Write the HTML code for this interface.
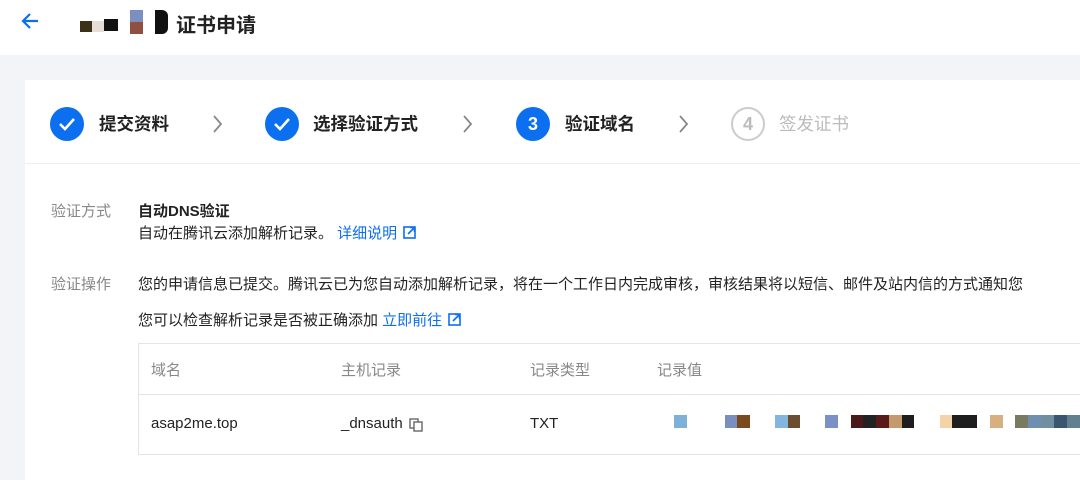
<!DOCTYPE html>
<html><head><meta charset="utf-8"><style>
*{margin:0;padding:0;box-sizing:border-box}
body{width:1080px;height:470px;overflow:hidden;background:#f2f4f7;font-family:"Liberation Sans","Noto Sans CJK SC",sans-serif;position:relative;color:#222}
.abs{position:absolute}
.hdr{left:0;top:0;width:1080px;height:55px;background:#fff}
.card{left:25px;top:80px;width:1060px;height:400px;background:#fff}
.circ{width:34px;height:34px;border-radius:50%;background:#0b6ff0;color:#fff;font-size:18px;font-weight:bold;display:flex;align-items:center;justify-content:center}
.st{font-size:17.5px;font-weight:bold;line-height:20px}
.lbl{font-size:15px;color:#888}
.t{font-size:15px;color:#222;white-space:nowrap}
.a{color:#0b6ff0}
.ic{display:inline-block;vertical-align:-1px;margin-left:6px}
.sq{position:absolute;top:415px;height:13px}
</style></head><body>
<div class="abs hdr"></div>
<svg class="abs" style="left:20px;top:11px" width="22" height="20"><path d="M18 10H4M10 3L3 10l7 7" stroke="#0b6ff0" stroke-width="2.2" fill="none"/></svg>
<div class="abs" style="left:80px;top:21px;width:12px;height:11px;background:#3d3018"></div>
<div class="abs" style="left:92px;top:21px;width:12px;height:11px;background:#e6ddd6"></div>
<div class="abs" style="left:104px;top:19px;width:14px;height:12px;background:#111"></div>
<div class="abs" style="left:130px;top:10px;width:13px;height:12px;background:#7b8fc0"></div>
<div class="abs" style="left:130px;top:22px;width:13px;height:12px;background:#905040"></div>
<div class="abs" style="left:155px;top:10px;width:13px;height:24px;background:#111;border-radius:0 6px 6px 0"></div>
<div class="abs" style="left:176px;top:9px;font-size:20px;font-weight:bold;color:#222">证书申请</div>
<div class="abs card"></div>
<div class="abs" style="left:25px;top:163px;width:1055px;height:1px;background:#eceef1"></div>

<div class="abs circ" style="left:50px;top:107px"><svg width="18" height="14"><path d="M2 7l5 5 9-10" stroke="#fff" stroke-width="2.6" fill="none"/></svg></div>
<div class="abs st" style="left:99px;top:114px">提交资料</div>
<svg class="abs" style="left:212px;top:114px" width="12" height="20"><path d="M2 2l7 8-7 8" stroke="#888" stroke-width="1.8" fill="none"/></svg>
<div class="abs circ" style="left:265px;top:107px"><svg width="18" height="14"><path d="M2 7l5 5 9-10" stroke="#fff" stroke-width="2.6" fill="none"/></svg></div>
<div class="abs st" style="left:313px;top:114px">选择验证方式</div>
<svg class="abs" style="left:462px;top:114px" width="12" height="20"><path d="M2 2l7 8-7 8" stroke="#888" stroke-width="1.8" fill="none"/></svg>
<div class="abs circ" style="left:516px;top:107px">3</div>
<div class="abs st" style="left:565px;top:114px">验证域名</div>
<svg class="abs" style="left:678px;top:114px" width="12" height="20"><path d="M2 2l7 8-7 8" stroke="#888" stroke-width="1.8" fill="none"/></svg>
<div class="abs circ" style="left:731px;top:107px;background:#fff;border:2px solid #ccc;color:#bbb">4</div>
<div class="abs st" style="left:779px;top:114px;color:#bbb;font-weight:normal">签发证书</div>

<div class="abs lbl" style="left:51px;top:200px">验证方式</div>
<div class="abs t" style="left:138px;top:200px;font-weight:bold">自动DNS验证</div>
<div class="abs t" style="left:138px;top:222px">自动在腾讯云添加解析记录。 <span class="a">详细说明</span><svg class="ic" width="13" height="13"><rect x="1" y="1" width="11" height="11" fill="none" stroke="#0b6ff0" stroke-width="1.6"/><path d="M5 8l6-6M7 1.5h4.5V6" stroke="#0b6ff0" stroke-width="1.6" fill="none"/></svg></div>
<div class="abs lbl" style="left:51px;top:273px">验证操作</div>
<div class="abs t" style="left:138px;top:273px">您的申请信息已提交。腾讯云已为您自动添加解析记录，将在一个工作日内完成审核，审核结果将以短信、邮件及站内信的方式通知您</div>
<div class="abs t" style="left:138px;top:309px">您可以检查解析记录是否被正确添加 <span class="a">立即前往</span><svg class="ic" width="13" height="13"><rect x="1" y="1" width="11" height="11" fill="none" stroke="#0b6ff0" stroke-width="1.6"/><path d="M5 8l6-6M7 1.5h4.5V6" stroke="#0b6ff0" stroke-width="1.6" fill="none"/></svg></div>

<div class="abs" style="left:138px;top:343px;width:950px;height:112px;border:1px solid #e2e4e8"></div>
<div class="abs" style="left:139px;top:344px;width:945px;height:51px;background:#fff;border-bottom:1px solid #e2e4e8"></div>
<div class="abs lbl" style="left:151px;top:359px">域名</div>
<div class="abs lbl" style="left:341px;top:359px">主机记录</div>
<div class="abs lbl" style="left:530px;top:359px">记录类型</div>
<div class="abs lbl" style="left:657px;top:359px">记录值</div>
<div class="abs t" style="left:151px;top:415px">asap2me.top</div>
<div class="abs t" style="left:341px;top:415px">_dnsauth</div>
<svg class="abs" style="left:409px;top:418px" width="14" height="14"><rect x="1" y="1" width="8" height="9" fill="none" stroke="#666" stroke-width="1.4"/><rect x="5" y="4" width="8" height="9" fill="#fff" stroke="#666" stroke-width="1.4"/></svg>
<div class="abs t" style="left:530px;top:415px">TXT</div>
<div class="sq" style="left:674px;width:13px;background:#7fb0d8"></div>
<div class="sq" style="left:725px;width:12px;background:#7b8fbf"></div>
<div class="sq" style="left:737px;width:13px;background:#7a4a1e"></div>
<div class="sq" style="left:775px;width:13px;background:#82b5e0"></div>
<div class="sq" style="left:788px;width:12px;background:#6b4e2e"></div>
<div class="sq" style="left:825px;width:13px;background:#7b8fc8"></div>
<div class="sq" style="left:851px;width:12px;background:#4a1a1a"></div>
<div class="sq" style="left:863px;width:13px;background:#222"></div>
<div class="sq" style="left:876px;width:13px;background:#5a1a1a"></div>
<div class="sq" style="left:889px;width:13px;background:#c49a6c"></div>
<div class="sq" style="left:902px;width:12px;background:#1e1e1e"></div>
<div class="sq" style="left:940px;width:12px;background:#f2d4a8"></div>
<div class="sq" style="left:952px;width:25px;background:#1e1e1e"></div>
<div class="sq" style="left:990px;width:13px;background:#d8b080"></div>
<div class="sq" style="left:1015px;width:13px;background:#7a7a60"></div>
<div class="sq" style="left:1028px;width:13px;background:#6f8fb0"></div>
<div class="sq" style="left:1041px;width:13px;background:#6f8fa0"></div>
<div class="sq" style="left:1054px;width:13px;background:#3a5570"></div>
<div class="sq" style="left:1067px;width:13px;background:#60808f"></div>
</body></html>
